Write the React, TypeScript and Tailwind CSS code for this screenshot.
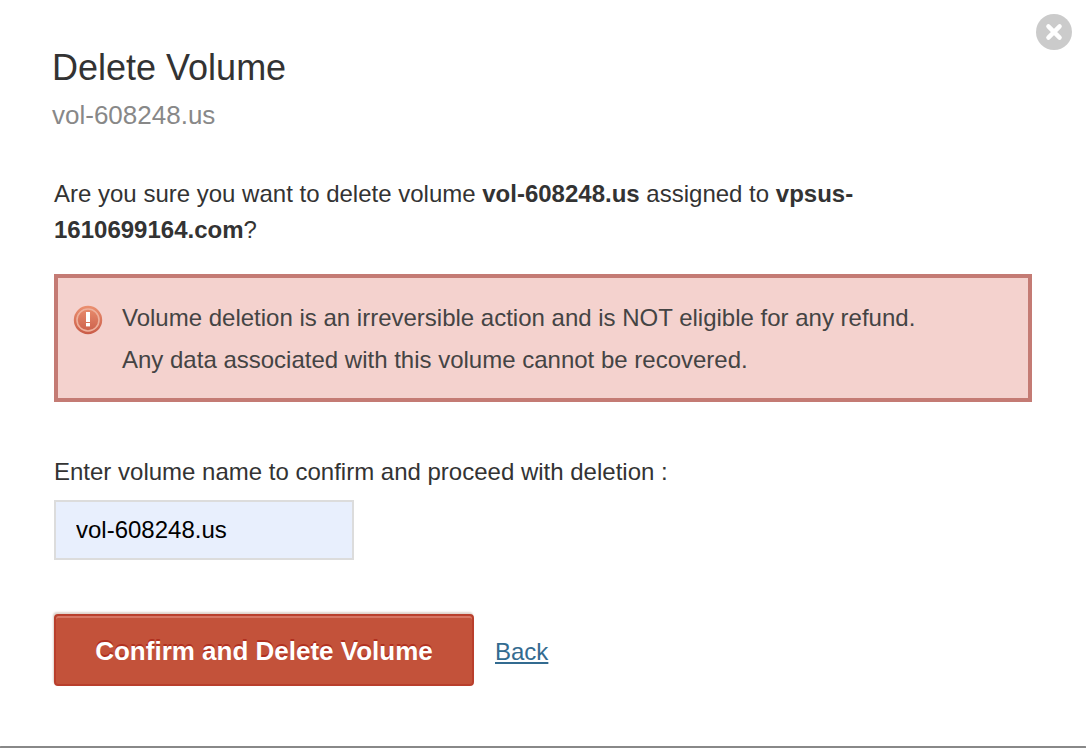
import React, { useState } from 'react';

interface AlertProps {
  lines: string[];
}

const CloseIcon: React.FC = () => (
  <svg viewBox="0 0 36 36" className="block w-9 h-9" aria-hidden="true">
    <circle cx="18" cy="18" r="18" fill="#cbcbcb" />
    <path d="M12.4 12.4l11.2 11.2M23.6 12.4L12.4 23.6" stroke="#fff" strokeWidth="4.4" strokeLinecap="round" />
  </svg>
);

const WarningIcon: React.FC = () => (
  <svg viewBox="0 0 30 30" className="block w-[30px] h-[30px] shrink-0" aria-hidden="true">
    <defs>
      <linearGradient id="warning-fill" x1="0" y1="0" x2="0" y2="1">
        <stop offset="0" stopColor="#eb9070" />
        <stop offset="1" stopColor="#c95c48" />
      </linearGradient>
    </defs>
    <circle cx="15" cy="15" r="14.2" fill="url(#warning-fill)" />
    <circle cx="15" cy="15" r="11" fill="none" stroke="#eeb09c" strokeWidth="1.6" />
    <rect x="13" y="7" width="4" height="10" fill="#fff" />
    <rect x="13" y="18" width="4" height="3.4" fill="#fff" />
  </svg>
);

const Alert: React.FC<AlertProps> = ({ lines }) => (
  <div role="alert" className="flex gap-[19px] mt-[26px] border-4 border-[#c47b74] bg-[#f4d2ce] pt-[19px] pb-[17px] pl-[15px] pr-4">
    <div className="pt-2">
      <WarningIcon />
    </div>
    <div className="text-[#444] leading-[42px]">
      {lines.map((line) => (
        <p key={line}>{line}</p>
      ))}
    </div>
  </div>
);

const App: React.FC = () => {
  const [name, setName] = useState('vol-608248.us');

  return (
    <div className="bg-[#888]">
      <main className="relative rounded-b-xs bg-white border-b-2 border-[#888] px-[52px] pt-[46px] pb-[60px] font-['Liberation_Sans',Arial,sans-serif] text-2xl text-[#333]">
        <button type="button" aria-label="Close" className="absolute top-[14px] right-[14px] cursor-pointer">
          <CloseIcon />
        </button>

        <header>
          <h1 className="text-4xl leading-[44px]">Delete Volume</h1>
          <p className="mt-[9px] text-[26px] leading-8 text-[#888]">vol-608248.us</p>
        </header>

        <form className="mt-[45px] px-[2px]" onSubmit={(e) => e.preventDefault()}>
          <p className="max-w-[820px] leading-9">
            Are you sure you want to delete volume <strong>vol-608248.us</strong> assigned to <strong>vpsus-1610699164.com</strong>?
          </p>

          <Alert
            lines={[
              'Volume deletion is an irreversible action and is NOT eligible for any refund.',
              'Any data associated with this volume cannot be recovered.',
            ]}
          />

          <label htmlFor="volume-name" className="block mt-[52px] leading-9">
            Enter volume name to confirm and proceed with deletion :
          </label>
          <input
            id="volume-name"
            type="text"
            value={name}
            onChange={(e) => setName(e.target.value)}
            className="block mt-[10px] w-[300px] h-[60px] px-5 border-2 border-[#dcdcdc] bg-[#e8effd] text-black outline-none"
          />

          <div className="flex items-baseline gap-[21px] mt-[54px]">
            <button
              type="submit"
              className="w-[420px] h-[72px] pt-[2px] rounded-sm border-2 border-[#b93f2c] bg-[#c3523a] text-[26px] font-bold text-white cursor-pointer [box-shadow:inset_0_2px_0_#d77664,-1px_-2px_2px_#dfd3cc] [text-shadow:0_-2px_0_#b0301f]"
            >
              Confirm and Delete Volume
            </button>
            <a href="#back" className="text-[#336b90] underline decoration-2 underline-offset-2">
              Back
            </a>
          </div>
        </form>
      </main>
    </div>
  );
};

export default App;
